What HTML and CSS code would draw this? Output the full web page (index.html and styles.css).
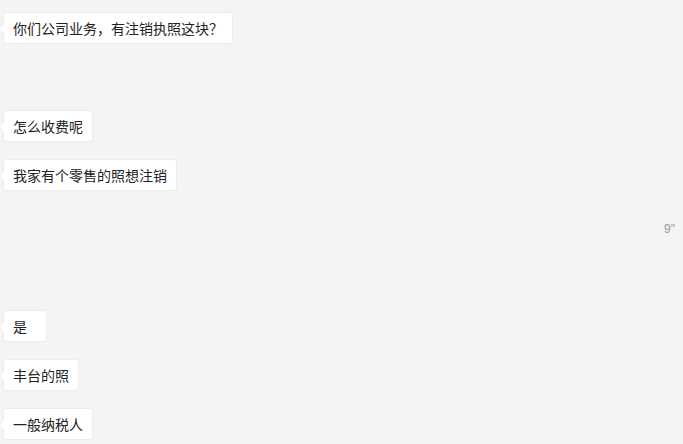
FILE: index.html
```html
<!DOCTYPE html>
<html lang="zh-CN">
<head>
    <meta charset="UTF-8">
    <meta name="viewport" content="width=device-width, initial-scale=1.0">
    <title>聊天记录</title>
    <link rel="stylesheet" href="styles.css">
</head>
<body>
    <div class="chat">
        <div class="msg msg-first"><span class="bubble">你们公司业务，有注销执照这块？</span></div>
        <div class="msg"><span class="bubble">怎么收费呢</span></div>
        <div class="msg"><span class="bubble">我家有个零售的照想注销</span></div>
        <div class="msg voice"><span class="duration">9"</span></div>
        <div class="msg"><span class="bubble">是</span></div>
        <div class="msg"><span class="bubble">丰台的照</span></div>
        <div class="msg"><span class="bubble">一般纳税人</span></div>
    </div>
</body>
</html>
```

FILE: styles.css
```css
body {
    background-color: #f4f4f4;
    color: #222;
    font-family: "Noto Sans CJK SC", "Microsoft YaHei", sans-serif;
    font-size: 14px;
    margin: 0;
    padding: 0;
}

.chat {
    display: flex;
    flex-direction: column;
    padding: 12px 8px 0 3px;
}

.msg {
    display: flex;
    margin-bottom: 17px;
}

.msg-first {
    margin-bottom: 66px;
}

.bubble {
    position: relative;
    min-width: 24px;
    background-color: #fff;
    border: 1px solid #ececec;
    border-radius: 3px;
    padding: 6px 9px;
    line-height: 18px;
}

.bubble::before {
    content: "";
    position: absolute;
    left: -4px;
    top: 12px;
    border-top: 4px solid transparent;
    border-bottom: 4px solid transparent;
    border-right: 4px solid #fff;
}

.voice {
    height: 85px;
    justify-content: flex-end;
}

.duration {
    color: #999;
    font-family: "Liberation Sans", Arial, sans-serif;
    font-size: 12px;
    line-height: 14px;
    padding-top: 14px;
}
```
